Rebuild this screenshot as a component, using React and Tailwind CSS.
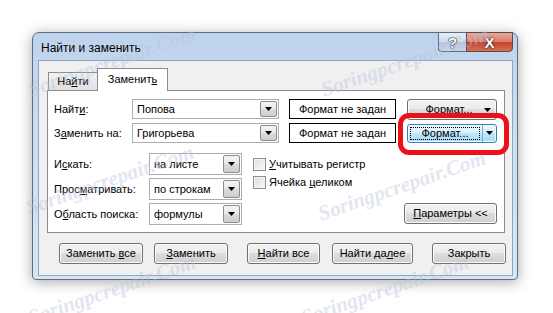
import React from "react";

const btn =
  "h-[21px] flex items-center justify-center rounded-[3px] border border-[#707070] bg-[linear-gradient(#f2f2f2_0%,#ebebeb_50%,#dddddd_50%,#cfcfcf_100%)] shadow-[inset_0_0_0_1px_#fbfbfb] text-black";

function Arrow() {
  return (
    <svg width="7" height="4" viewBox="0 0 7 4">
      <path d="M0 0h7L3.5 4z" fill="#000" />
    </svg>
  );
}

function Combo({ value, w, h = "h-[20px]" }) {
  return (
    <div className={`${w} ${h} flex border border-[#abadb3] bg-white p-[1px]`}>
      <div className="flex-1 pl-[3px] flex items-center leading-none">{value}</div>
      <div className="w-[17px] flex items-center justify-center border border-[#8c8c8c] rounded-[2px] bg-[linear-gradient(#f4f4f4_0%,#e8e8e8_50%,#dadada_50%,#cfcfcf_100%)]">
        <Arrow />
      </div>
    </div>
  );
}

function Check({ children }) {
  return (
    <div className="flex items-center h-[18px]">
      <div className="w-[13px] h-[13px] border border-[#8f8f8f] bg-[linear-gradient(135deg,#dcdcdc,#fbfbfb)] shadow-[inset_0_0_0_1px_#f4f4f4]" />
      <span className="ml-[3px]">{children}</span>
    </div>
  );
}

function Mark({ x, y }) {
  return (
    <span
      className="absolute -translate-x-1/2 -translate-y-1/2 rotate-[-19deg] whitespace-nowrap italic font-bold text-[21px] text-[#b7c2dc] opacity-40 pointer-events-none"
      style={{ left: x, top: y, fontFamily: '"Liberation Serif", serif' }}
    >
      Soringpcrepair.Com
    </span>
  );
}

export default function App() {
  return (
    <div
      className="relative w-[553px] h-[313px] overflow-hidden bg-white pt-[32px] pl-[32px] text-[11px] text-black leading-none"
      style={{ fontFamily: '"Liberation Sans", Arial, sans-serif' }}
    >
      {/* window */}
      <div className="w-[486px] h-[248px] flex flex-col rounded-t-[7px] rounded-b-[4px] border border-[#5d6d82] bg-[linear-gradient(#bdd3ec,#cddef1_40%,#d8e5f3)] shadow-[0_2px_14px_rgba(0,0,0,0.35)]">
        {/* title bar */}
        <div className="h-[27px] flex items-start">
          <div className="self-center pl-[8px] pt-[2px] text-[12px]">Найти и заменить</div>
          <div className="ml-auto mr-[4px] mt-[-1px] flex h-[20px]">
            <div className="w-[28px] flex items-center justify-center rounded-bl-[4px] border border-[#5d6d82] border-r-0 bg-[linear-gradient(#e6eef7_0%,#cfdcea_50%,#b3c6dc_50%,#c6d7ea_100%)] text-white font-bold text-[15px] [text-shadow:0_0_1px_#222,0_0_1px_#222,0_0_2px_#333]">
              ?
            </div>
            <div className="w-[47px] flex items-center justify-center rounded-br-[4px] border border-[#5d4844] bg-[linear-gradient(#e9a99b_0%,#dc7d6c_48%,#c7412c_52%,#d6705a_100%)] text-white font-bold text-[15px] [text-shadow:0_0_1px_#222,0_0_1px_#222,0_0_2px_#333]">
              X
            </div>
          </div>
        </div>

        {/* client area */}
        <div className="ml-[5px] mr-[4px] mb-[3px] flex-1 border border-[#8fa6c1] bg-[#f0f0f0] pt-[7px] pl-[8px]">
          {/* tabs */}
          <div className="flex items-end h-[22px] pl-[1px]">
            <div className="w-[50px] h-[18px] flex items-center justify-center border border-b-0 border-[#898c95] bg-[linear-gradient(#f3f3f3,#e1e1e1)]">
              <span>
                На<span className="underline">й</span>ти
              </span>
            </div>
            <div className="relative z-10 ml-[-1px] mb-[-1px] w-[71px] h-[23px] flex items-center justify-center border border-b-0 border-[#898c95] bg-white pb-[1px]">
              <span>
                Замени<span>т</span>
                <span className="underline">ь</span>
              </span>
            </div>
          </div>

          {/* panel */}
          <div className="w-[458px] h-[143px] border border-[#898c95] bg-white pt-[8px] pl-[6px] pr-[7px]">
            <div className="flex items-center h-[20px]">
              <div className="w-[78px]">
                Найт<span className="underline">и</span>:
              </div>
              <Combo value="Попова" w="w-[147px]" />
              <div className="ml-[10px] w-[107px] h-[20px] flex items-center justify-center border border-black">
                Формат не задан
              </div>
              <div className={`${btn} ml-[11px] w-[90px] h-[19px] relative`}>
                <span className="pr-[6px]">Формат...</span>
                <span className="absolute right-[5px] top-[8px]">
                  <Arrow />
                </span>
              </div>
            </div>
            <div className="flex items-center h-[20px] mt-[4px]">
              <div className="w-[78px]">
                З<span className="underline">а</span>менить на:
              </div>
              <Combo value="Григорьева" w="w-[147px]" />
              <div className="ml-[10px] w-[107px] h-[20px] flex items-center justify-center border border-black">
                Формат не задан
              </div>
              <div className="ml-[11px] w-[90px] h-[19px] flex rounded-[3px] border border-[#3c7fb1] bg-[linear-gradient(#eaf6fd_0%,#d9f0fc_50%,#bee6fd_50%,#a7d9f5_100%)] shadow-[inset_0_0_0_1px_#f2fbff]">
                <div className="flex-1 m-[2px] flex items-center justify-center border border-dotted border-black">
                  Формат...
                </div>
                <div className="w-[14px] flex items-center justify-center border-l border-[#7fa9c8]">
                  <Arrow />
                </div>
              </div>
            </div>

            <div className="flex mt-[10px]">
              <div className="flex flex-col gap-[3px]">
                <div className="flex items-center h-[22px]">
                  <div className="w-[95px]">
                    И<span className="underline">с</span>кать:
                  </div>
                  <Combo value="на листе" w="w-[93px]" h="h-[22px]" />
                </div>
                <div className="flex items-center h-[22px]">
                  <div className="w-[95px]">
                    Прос<span className="underline">м</span>атривать:
                  </div>
                  <Combo value="по строкам" w="w-[93px]" h="h-[22px]" />
                </div>
                <div className="flex items-center h-[22px]">
                  <div className="w-[95px]">
                    О<span className="underline">б</span>ласть поиска:
                  </div>
                  <Combo value="формулы" w="w-[93px]" h="h-[22px]" />
                </div>
              </div>
              <div className="ml-[11px] flex-1 flex flex-col pt-[2px]">
                <Check>
                  <span className="underline">У</span>читывать регистр
                </Check>
                <Check>
                  Ячейка <span className="underline">ц</span>еликом
                </Check>
              </div>
              <div className={`${btn} self-end mb-[1px] w-[93px]`}>
                <span>
                  <span className="underline">П</span>араметры &lt;&lt;
                </span>
              </div>
            </div>
          </div>

          {/* bottom buttons */}
          <div className="flex mt-[10px] pl-[12px]">
            <div className={`${btn} w-[84px]`}>
              <span>
                Заменить <span className="underline">в</span>се
              </span>
            </div>
            <div className={`${btn} w-[74px] ml-[11px]`}>
              <span>
                <span className="underline">З</span>аменить
              </span>
            </div>
            <div className={`${btn} w-[73px] ml-[19px]`}>
              <span>
                <span className="underline">Н</span>айти все
              </span>
            </div>
            <div className={`${btn} w-[81px] ml-[12px]`}>
              <span>
                Найти да<span className="underline">л</span>ее
              </span>
            </div>
            <div className={`${btn} w-[74px] ml-[19px]`}>Закрыть</div>
          </div>
        </div>
      </div>

      {/* red highlight */}
      <div className="absolute left-[398px] top-[113px] w-[111px] h-[42px] rounded-[11px] border-[5px] border-[#ea1119]" />

      {/* watermarks */}
      <Mark x={112} y={62} />
      <Mark x={405} y={62} />
      <Mark x={110} y={180} />
      <Mark x={402} y={186} />
      <Mark x={112} y={290} />
      <Mark x={385} y={290} />
    </div>
  );
}
